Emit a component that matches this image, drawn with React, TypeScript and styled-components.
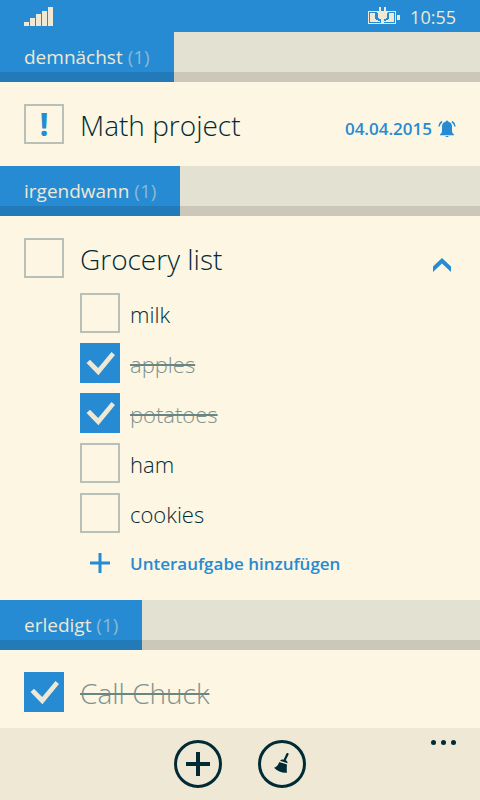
import React, { useState } from "react";
import styled, { createGlobalStyle } from "styled-components";

const color = {
  blue: "#268bd2",
  paper: "#fdf6e3",
  bar: "#eee8d5",
  strip: "#e3e1d2",
  ink: "#002b36",
  border: "#b9c0b8",
};

const GlobalStyle = createGlobalStyle`
  * { box-sizing: border-box; }
  body {
    margin: 0;
    background: ${color.paper};
    color: ${color.ink};
    font-family: "Open Sans", "Noto Sans", sans-serif;
  }
  button { border: 0; padding: 0; background: none; font: inherit; color: inherit; cursor: pointer; }
`;

const Page = styled.div`
  display: flex;
  flex-direction: column;
  height: 100vh;
`;

const StatusBar = styled.header`
  display: flex;
  flex: none;
  justify-content: space-between;
  align-items: center;
  height: 32px;
  padding: 0 24px;
  background: ${color.blue};
  color: ${color.bar};
`;

const StatusGroup = styled.div`
  display: flex;
  align-items: center;
  gap: 10px;
`;

const Clock = styled.time`
  font-size: 18px;
  line-height: 32px;
  padding-top: 2px;
`;

const List = styled.main`
  flex: 1;
  min-height: 0;
  overflow-y: auto;
  scrollbar-width: none;
`;

const SectionHeader = styled.div`
  display: flex;
  height: 50px;
  background: linear-gradient(${color.strip} 40px, #cbc8ba 40px);
`;

const SectionTitle = styled.h2`
  margin: 0;
  padding: 0 24px;
  font-size: 19px;
  line-height: 50px;
  font-weight: 400;
  color: ${color.bar};
  background: linear-gradient(${color.blue} 40px, #227ab8 40px);
`;

const Count = styled.span`
  color: #8ab9d3;
`;

const TaskRow = styled.div`
  display: flex;
  align-items: center;
  gap: 16px;
  min-height: 84px;
  padding: 0 24px;
`;

const SubList = styled.ul`
  display: flex;
  flex-direction: column;
  gap: 10px;
  margin: 0;
  padding: 0 24px 0 80px;
  list-style: none;
`;

const ExpandedTask = styled.div`
  padding-bottom: 17px;
  ${TaskRow} { min-height: 77px; padding-top: 7px; }
`;

const SubRow = styled.li`
  display: flex;
  align-items: center;
  gap: 10px;
`;

const TaskLabel = styled.label<{ $done?: boolean; $small?: boolean }>`
  padding-top: 2px;
  font-size: ${(p) => (p.$small ? 22 : 28)}px;
  line-height: 38px;
  font-weight: 300;
  color: ${(p) => (p.$done ? "#7e9390" : color.ink)};
  text-decoration: ${(p) => (p.$done ? "line-through 2px #6b8583" : "none")};
`;

const BoxFrame = styled.span`
  display: grid;
  flex: none;
  width: 40px;
  height: 40px;
  > * { grid-area: 1 / 1; }
`;

const BoxInput = styled.input`
  appearance: none;
  width: 40px;
  height: 40px;
  margin: 0;
  border: 2px solid ${color.border};
  cursor: pointer;
  &:checked { background: ${color.blue}; border-color: ${color.blue}; }
`;

const BoxMark = styled.svg`
  z-index: 1;
  pointer-events: none;
`;

const Priority = styled.span`
  place-self: center;
  pointer-events: none;
  font-size: 32px;
  line-height: 36px;
  font-weight: 700;
  color: ${color.blue};
`;

const Due = styled.div`
  display: flex;
  align-items: center;
  gap: 6px;
  margin-left: auto;
  padding-top: 10px;
  color: ${color.blue};
  font-size: 17px;
  line-height: 24px;
  font-weight: 600;
`;

const Collapse = styled.button`
  display: grid;
  place-items: center;
  width: 28px;
  height: 28px;
  margin-left: auto;
  margin-top: 14px;
`;

const AddSubtask = styled.button`
  display: flex;
  align-items: center;
  gap: 10px;
  height: 40px;
  color: ${color.blue};
  font-size: 17px;
  font-weight: 600;
`;

const AppBar = styled.footer`
  display: grid;
  flex: none;
  grid-template-columns: 1fr auto 1fr;
  height: 72px;
  padding: 0 24px;
  background: ${color.bar};
`;

const AppActions = styled.div`
  grid-column: 2;
  display: flex;
  align-items: center;
  gap: 36px;
`;

const RoundButton = styled.button`
  display: grid;
  place-items: center;
  width: 48px;
  height: 48px;
  border: 3px solid ${color.ink};
  border-radius: 50%;
`;

const MoreButton = styled.button`
  display: flex;
  justify-self: end;
  align-self: start;
  padding: 12px 0;
`;

const SignalIcon = () => (
  <svg width="29" height="20" viewBox="0 0 29 20" fill="currentColor" shapeRendering="crispEdges" aria-label="Signal">
    <path d="M0 16h5v4H0zM6 12h5v8H6zM12 8h5v12h-5zM18 5h5v15h-5zM24 1h5v19h-5z" />
  </svg>
);

const BatteryIcon = () => (
  <svg width="32" height="18" viewBox="0 0 32 18" fill="currentColor" shapeRendering="crispEdges" aria-label="Charging">
    <path d="M0 4h10v1H1v11h12v1H0zM18 4h10v13H16v-1h11V5h-9zM29 8h3v5h-3z" />
    <path d="M2 6h5v6h1v1h2v1h2v1H2zM26 6h-5v6h-1v1h-2v1h-2v1h10z" />
    <path d="M11 0h2v4h3V0h2v4h2v2h-1v5h-1v1h-2v5h-3v-5h-2v-1h-1V6H9V4h2z" />
  </svg>
);

const BellIcon = () => (
  <svg width="18" height="18" viewBox="0 0 18 18" fill="currentColor" aria-hidden="true">
    <path d="M8 1.500a1 1 0 0 1 2 0C12.700 2 14 4 14 6.500V11c0 1.500.8 2.500 2 3.500v.8H2v-.8c1.200-1 2-2 2-3.500V6.500C4 4 5.300 2 8 1.500zM7.300 16h3.400c-.3 1.500-3 1.500-3.400 0z" />
    <path d="M4 1.500C2 2.800 1.200 4.300 1 6.500M14 1.500c2 1.300 2.800 2.800 3 5" fill="none" stroke="currentColor" strokeWidth="1.500" />
  </svg>
);

const ChevronIcon = () => (
  <svg width="20" height="16" viewBox="0 0 20 16" aria-hidden="true">
    <path d="M1 9.500L10 1l9 8.500V15l-9-8.500L1 15z" fill={color.blue} />
  </svg>
);

const SmallPlus = () => (
  <svg width="40" height="40" viewBox="0 0 40 40" fill="currentColor" aria-hidden="true">
    <path d="M18.500 10h3v8.500H30v3h-8.500V30h-3v-8.500H10v-3h8.500z" />
  </svg>
);

const LargePlus = () => (
  <svg width="24" height="24" viewBox="0 0 24 24" fill={color.ink} aria-hidden="true">
    <path d="M10 0h4v10h10v4H14v10h-4V14H0v-4h10z" />
  </svg>
);

const BroomIcon = () => (
  <svg width="42" height="42" viewBox="0 0 42 42" fill={color.ink} aria-hidden="true">
    <path d="M25.300 10.700c.5-1.100 2.500-.7 2.300.8L24.800 17.300c1.300.7 1.800 1.700 1.700 3l-7.500-2.600c1-1.100 2.300-1.300 3.600-1z" />
    <path d="M18.300 18.900l7.700 2.700c-.3 2.600-.3 5.200-.1 8.200-5 .3-9.200-1.300-12.800-5 2.500-1 4.200-2.900 5.200-5.900z" />
  </svg>
);

const MoreIcon = () => (
  <svg width="25" height="5" viewBox="0 0 25 5" fill={color.ink} aria-hidden="true">
    <circle cx="2.500" cy="2.500" r="2.500" />
    <circle cx="12.500" cy="2.500" r="2.500" />
    <circle cx="22.500" cy="2.500" r="2.500" />
  </svg>
);

type BoxProps = { id: string; checked: boolean; onChange: () => void; priority?: boolean };

const CheckBox = ({ id, checked, onChange, priority }: BoxProps) => (
  <BoxFrame>
    <BoxInput type="checkbox" id={id} checked={checked} onChange={onChange} />
    {checked && (
      <BoxMark width="40" height="40" viewBox="0 0 40 40" aria-hidden="true">
        <path d="M6.500 20l3.500-3.200 8.200 8.200L31.500 9l3.500 3-16.600 20.300z" fill={color.bar} />
      </BoxMark>
    )}
    {priority && !checked && <Priority aria-hidden="true">!</Priority>}
  </BoxFrame>
);

const Section = ({ title, count, children }: { title: string; count: number; children: React.ReactNode }) => (
  <section>
    <SectionHeader>
      <SectionTitle>
        {title} <Count>({count})</Count>
      </SectionTitle>
    </SectionHeader>
    {children}
  </section>
);

const groceries = ["milk", "apples", "potatoes", "ham", "cookies"];

export default function App() {
  const [done, setDone] = useState<Record<string, boolean>>({ apples: true, potatoes: true, chuck: true });
  const [open, setOpen] = useState(true);
  const box = (id: string) => ({
    id,
    checked: !!done[id],
    onChange: () => setDone((d) => ({ ...d, [id]: !d[id] })),
  });

  return (
    <Page>
      <GlobalStyle />
      <StatusBar>
        <SignalIcon />
        <StatusGroup>
          <BatteryIcon />
          <Clock>10:55</Clock>
        </StatusGroup>
      </StatusBar>
      <List>
        <Section title="demnächst" count={1}>
          <TaskRow>
            <CheckBox {...box("math")} priority />
            <TaskLabel htmlFor="math" $done={done.math}>Math project</TaskLabel>
            <Due>
              <time dateTime="2015-04-04">04.04.2015</time>
              <BellIcon />
            </Due>
          </TaskRow>
        </Section>
        <Section title="irgendwann" count={1}>
          <ExpandedTask>
            <TaskRow>
              <CheckBox {...box("grocery")} />
              <TaskLabel htmlFor="grocery" $done={done.grocery}>Grocery list</TaskLabel>
              <Collapse aria-label="Einklappen" aria-expanded={open} onClick={() => setOpen(!open)}>
                <ChevronIcon />
              </Collapse>
            </TaskRow>
            {open && (
              <SubList>
                {groceries.map((name) => (
                  <SubRow key={name}>
                    <CheckBox {...box(name)} />
                    <TaskLabel htmlFor={name} $small $done={done[name]}>{name}</TaskLabel>
                  </SubRow>
                ))}
                <li>
                  <AddSubtask>
                    <SmallPlus />
                    Unteraufgabe hinzufügen
                  </AddSubtask>
                </li>
              </SubList>
            )}
          </ExpandedTask>
        </Section>
        <Section title="erledigt" count={1}>
          <TaskRow>
            <CheckBox {...box("chuck")} />
            <TaskLabel htmlFor="chuck" $done={done.chuck}>Call Chuck</TaskLabel>
          </TaskRow>
        </Section>
      </List>
      <AppBar>
        <AppActions>
          <RoundButton aria-label="Neue Aufgabe">
            <LargePlus />
          </RoundButton>
          <RoundButton aria-label="Aufräumen">
            <BroomIcon />
          </RoundButton>
        </AppActions>
        <MoreButton aria-label="Mehr">
          <MoreIcon />
        </MoreButton>
      </AppBar>
    </Page>
  );
}
